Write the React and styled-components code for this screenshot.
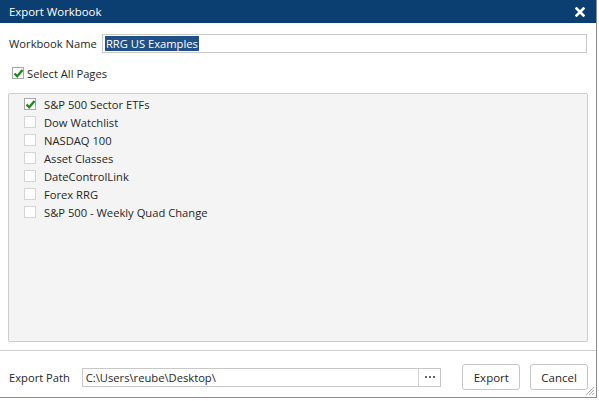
import React from "react";
import styled, { createGlobalStyle } from "styled-components";

const GlobalStyle = createGlobalStyle`
  html, body {
    margin: 0;
    padding: 0;
    background: #ffffff;
    font-family: "Open Sans", "Noto Sans", sans-serif;
    font-size: 11.2px;
    color: #262626;
  }
`;

const Dialog = styled.div`
  width: 597px;
  height: 398px;
  box-sizing: border-box;
  border-right: 1px solid #8c8c8c;
  border-bottom: 1px solid #8c8c8c;
  background: #fff;
  display: flex;
  flex-direction: column;
  position: relative;
`;

const TitleBar = styled.div`
  height: 23px;
  flex: none;
  background: #0c3f71;
  color: #fff;
  display: flex;
  align-items: center;
  justify-content: space-between;
  padding: 0 9px 0 9px;
  font-size: 11.4px;
`;

const Close = styled.span`
  display: flex;
  align-items: center;
  margin-right: 2px;
`;

const Body = styled.div`
  flex: 1;
  display: flex;
  flex-direction: column;
  padding: 11px 8px 0 8px;
`;

const Row = styled.div`
  display: flex;
  align-items: center;
  gap: 5px;
  padding-left: 1px;
  white-space: nowrap;
`;

const TextInput = styled.div`
  flex: 1;
  margin-right: 1px;
  height: 19px;
  box-sizing: border-box;
  border: 1px solid #c8c8c8;
  display: flex;
  align-items: center;
  padding-left: 2px;
`;

const Selected = styled.span`
  background: #1f5088;
  color: #fff;
  padding: 0 1px;
  line-height: 15px;
`;

const SelectAll = styled.label`
  display: flex;
  align-items: center;
  gap: 3px;
  margin: 12px 0 0 4px;
  height: 16px;
`;

const Box = styled.span`
  width: 12px;
  height: 12px;
  box-sizing: border-box;
  border: 1px solid ${(p) => (p.$checked ? "#a8a8a8" : "#d4d4d4")};
  background: #fff;
  position: relative;
  flex: none;

  svg {
    position: absolute;
    left: 0;
    top: 0;
  }
`;

const ListPanel = styled.div`
  margin-top: 12px;
  height: 249px;
  box-sizing: border-box;
  background: #f4f4f4;
  border: 1px solid #cdcdcd;
  border-radius: 2px;
  padding: 1px 0 0 15px;
`;

const ListItem = styled.div`
  display: flex;
  align-items: center;
  gap: 8px;
  height: 18px;
`;

const Divider = styled.div`
  height: 1px;
  background: #cfcfcf;
  margin: 8px -8px 0 -8px;
`;

const Footer = styled.div`
  display: flex;
  align-items: center;
  padding: 13px 0 0 1px;
`;

const PathLabel = styled.span`
  width: 73px;
  white-space: nowrap;
`;

const PathInput = styled.div`
  width: 361px;
  height: 19px;
  box-sizing: border-box;
  border: 1px solid #c8c8c8;
  display: flex;
  align-items: center;
`;

const PathText = styled.span`
  flex: 1;
  padding-left: 3px;
`;

const Dots = styled.span`
  width: 21px;
  height: 100%;
  border-left: 1px solid #d4d4d4;
  display: flex;
  align-items: center;
  justify-content: center;
  gap: 2px;
`;

const Dot = styled.span`
  width: 2px;
  height: 2px;
  background: #666;
`;

const Button = styled.button`
  width: 58px;
  height: 26px;
  margin-left: ${(p) => p.$gap}px;
  background: #fff;
  border: 1px solid #c6c6c6;
  border-radius: 3px;
  font-family: "Open Sans", "Noto Sans", sans-serif;
  font-size: 11.5px;
  color: #262626;
  padding: 0;
`;

const Grip = styled.svg`
  position: absolute;
  right: 1px;
  bottom: 1px;
`;

const Check = () => (
  <svg width="11" height="11" viewBox="0 0 11 11">
    <path d="M1.5 5.5 L4.2 8.2 L9.5 2" stroke="#1e8a1e" strokeWidth="2.4" fill="none" />
  </svg>
);

const CheckBox = ({ checked }) => (
  <Box $checked={checked}>{checked && <Check />}</Box>
);

const pages = [
  { name: "S&P 500 Sector ETFs", checked: true },
  { name: "Dow Watchlist" },
  { name: "NASDAQ 100" },
  { name: "Asset Classes" },
  { name: "DateControlLink" },
  { name: "Forex RRG" },
  { name: "S&P 500 - Weekly Quad Change" },
];

export default function App() {
  return (
    <>
      <GlobalStyle />
      <Dialog>
        <TitleBar>
          <span>Export Workbook</span>
          <Close>
            <svg width="10" height="10" viewBox="0 0 10 10">
              <path d="M1.5 1.5 L8.5 8.5 M8.5 1.5 L1.5 8.5" stroke="#fff" strokeWidth="2.6" strokeLinecap="square" />
            </svg>
          </Close>
        </TitleBar>
        <Body>
          <Row>
            <span>Workbook Name</span>
            <TextInput>
              <Selected>RRG US Examples</Selected>
            </TextInput>
          </Row>
          <SelectAll>
            <CheckBox checked />
            <span>Select All Pages</span>
          </SelectAll>
          <ListPanel>
            {pages.map((p) => (
              <ListItem key={p.name}>
                <CheckBox checked={p.checked} />
                <span>{p.name}</span>
              </ListItem>
            ))}
          </ListPanel>
          <Divider />
          <Footer>
            <PathLabel>Export Path</PathLabel>
            <PathInput>
              <PathText>C:\Users\reube\Desktop\</PathText>
              <Dots>
                <Dot />
                <Dot />
                <Dot />
              </Dots>
            </PathInput>
            <Button $gap={21}>Export</Button>
            <Button $gap={10}>Cancel</Button>
          </Footer>
        </Body>
        <Grip width="12" height="12" viewBox="0 0 12 12">
          <path d="M11 3 L3 11 M11 6 L6 11 M11 9 L9 11" stroke="#aaa" strokeWidth="1" />
        </Grip>
      </Dialog>
    </>
  );
}
